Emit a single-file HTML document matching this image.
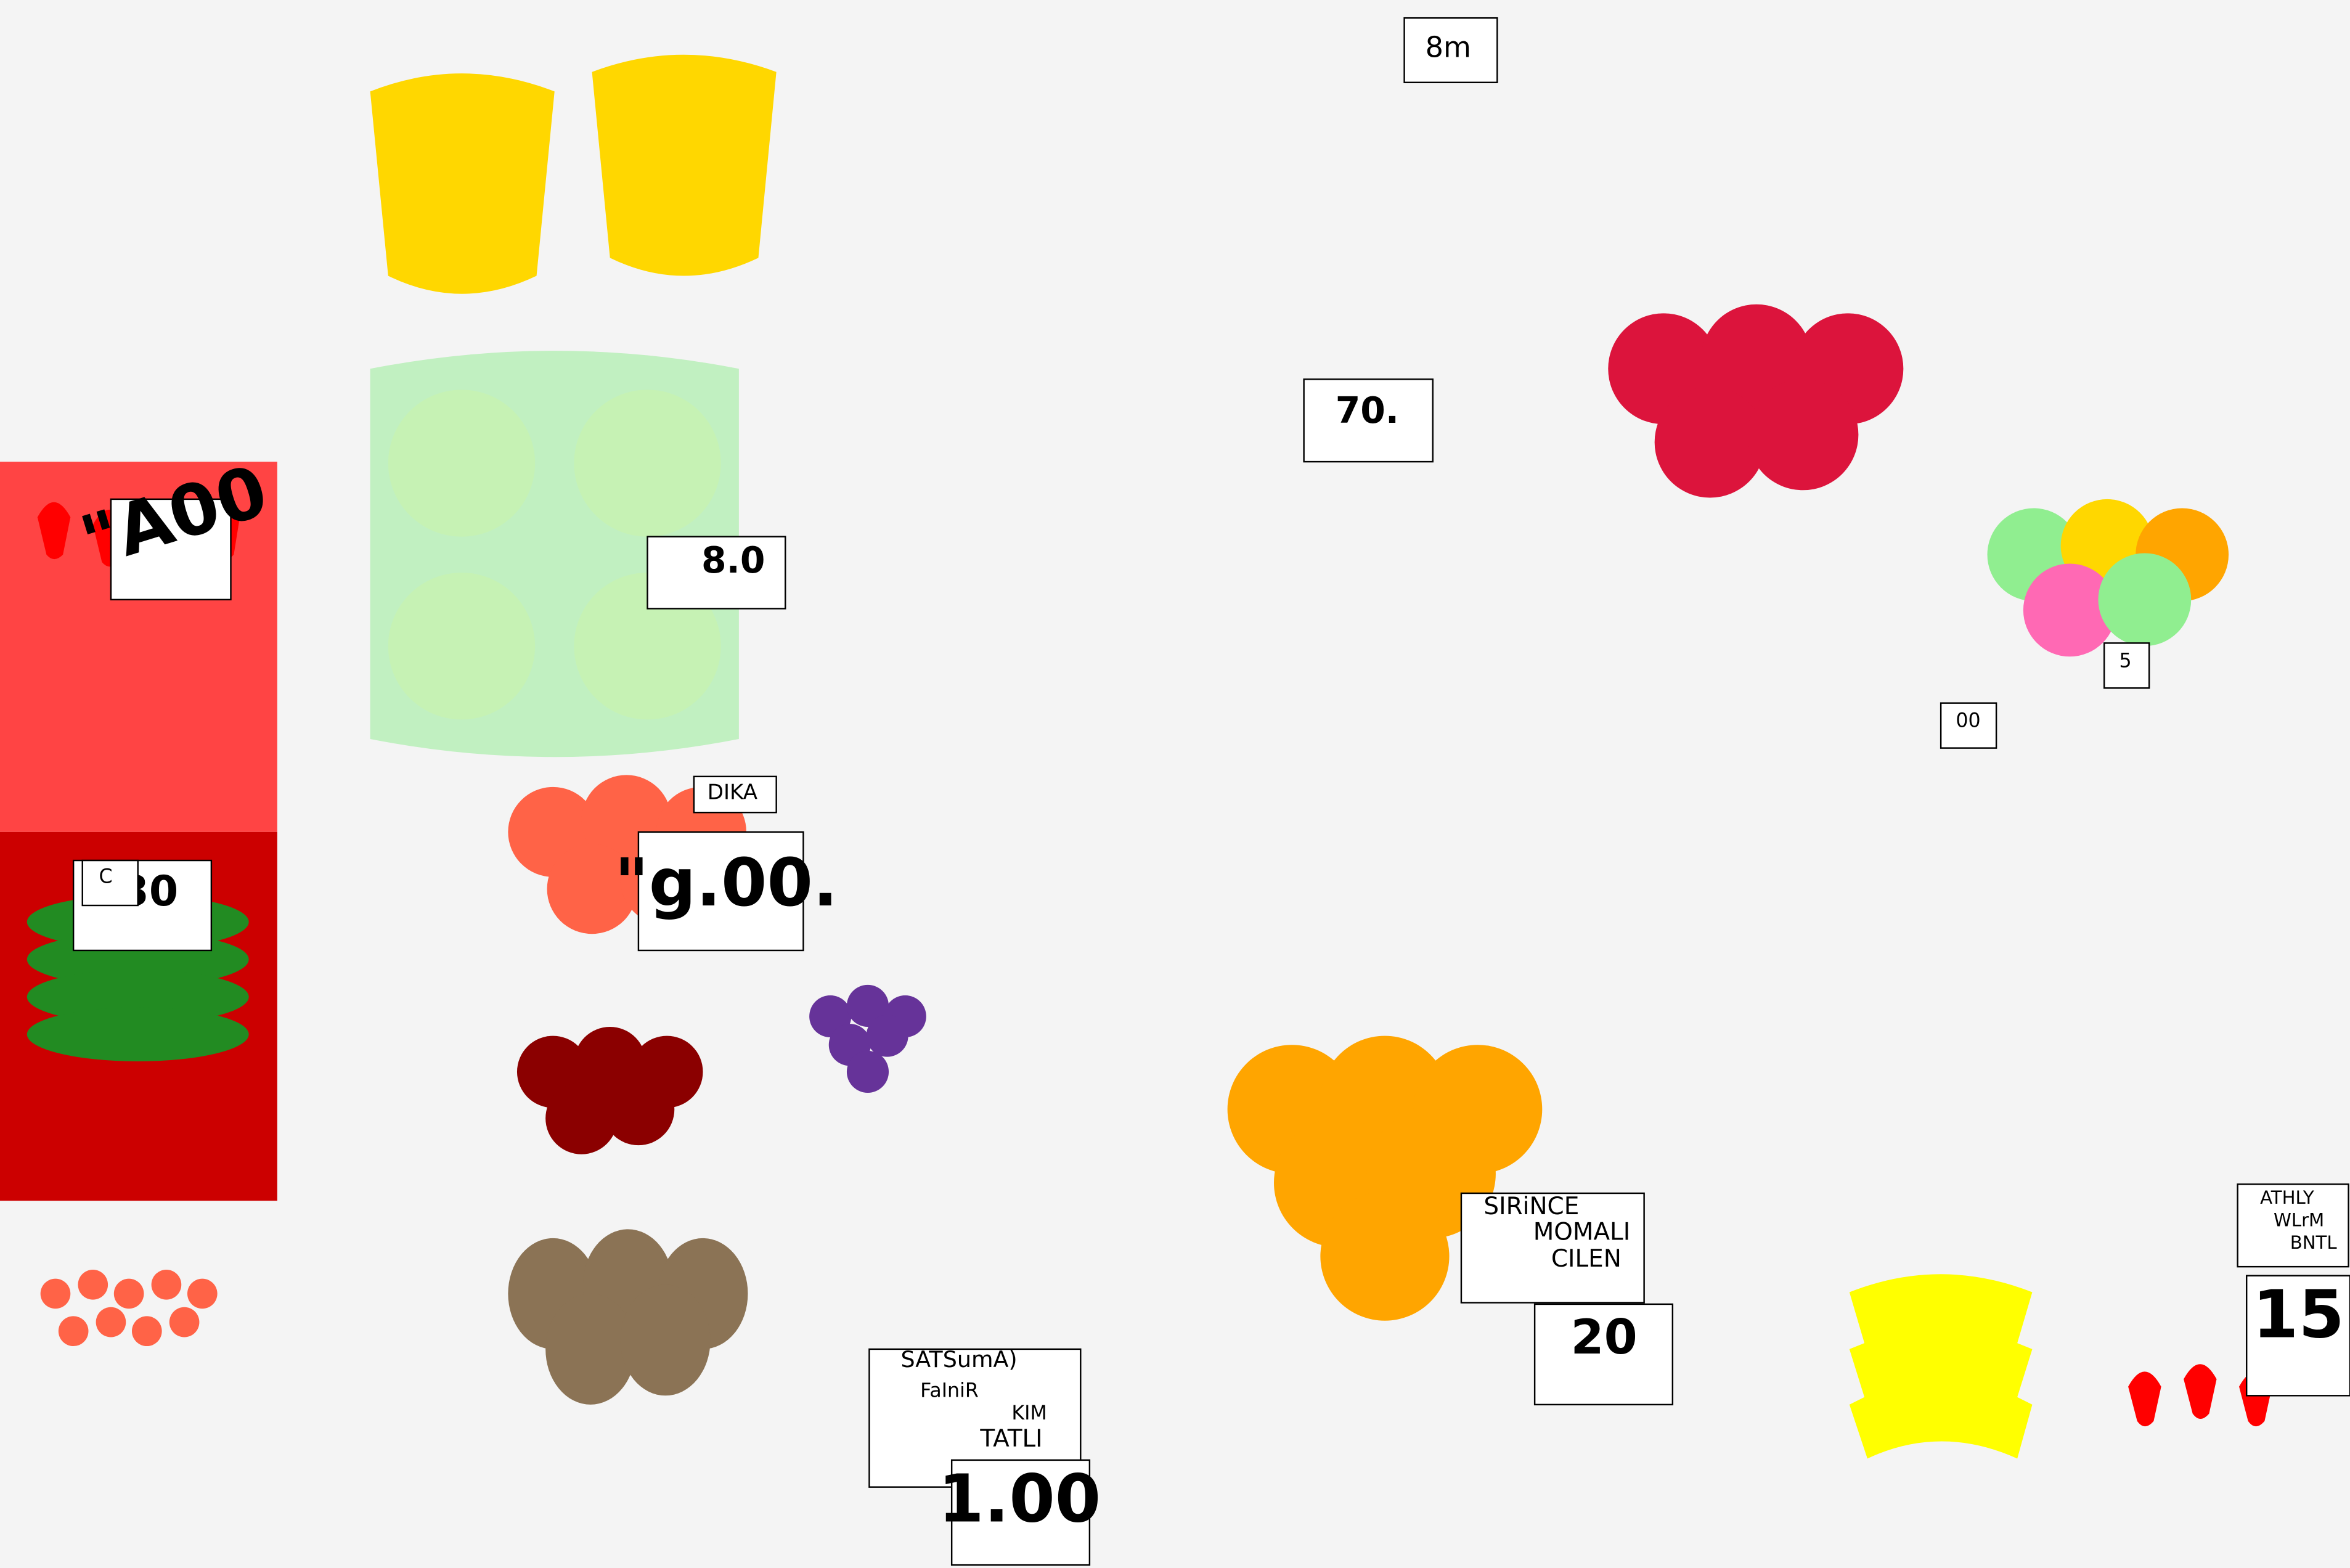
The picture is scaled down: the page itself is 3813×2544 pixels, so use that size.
<!DOCTYPE html>
<html><head><meta charset="utf-8"><style>
html,body{margin:0;padding:0;background:#f4f4f4;}
svg{display:block;}
text{font-family:"DejaVu Sans","Liberation Sans",sans-serif;}
</style></head><body>
<svg width="3813" height="2544" viewBox="0 0 1568 1046" preserveAspectRatio="none" xmlns="http://www.w3.org/2000/svg">
<rect width="1568" height="1046" fill="#f4f4f4"/>
<path d="M247,61 Q308,37 370,61 L358,184 Q308,208 259,184 Z" fill="#FFD700"/>
<path d="M395,48 Q456,25 518,48 L506,172 Q456,196 407,172 Z" fill="#FFD700"/>
<path d="M247,246 Q370,222 493,246 L493,493 Q370,517 247,493 Z" fill="#c1f0c1"/>
<g fill="#c6f2b4"><circle cx="308" cy="309" r="49"/><circle cx="432" cy="309" r="49"/><circle cx="308" cy="431" r="49"/><circle cx="432" cy="431" r="49"/></g>
<rect x="0" y="308" width="185" height="247" fill="#ff4444"/>
<rect x="0" y="555" width="185" height="246" fill="#cc0000"/>
<g fill="#ff0000">
<path d="M25,345 Q36,325 47,345 L42,370 Q36,376 31,370 Z"/>
<path d="M62,350 Q73,330 84,350 L79,375 Q73,381 68,375 Z"/>
<path d="M140,345 Q151,325 160,345 L156,370 Q151,376 146,370 Z"/>
</g>
<rect x="74" y="333" width="80" height="67" fill="#fff" stroke="#000"/>
<text x="50" y="362" font-size="47" font-weight="bold" transform="rotate(-17 110 335)">"A00</text>
<g fill="#228b22"><ellipse cx="92" cy="615" rx="74" ry="18"/><ellipse cx="92" cy="640" rx="74" ry="18"/><ellipse cx="92" cy="665" rx="74" ry="18"/><ellipse cx="92" cy="690" rx="74" ry="18"/></g>
<rect x="49" y="574" width="92" height="60" fill="#fff" stroke="#000"/>
<text x="80" y="604" font-size="28" font-weight="bold">30</text>
<rect x="55" y="574" width="37" height="30" fill="#fff" stroke="#000"/>
<text x="66" y="589" font-size="13">C</text>
<g fill="#ff6347"><circle cx="369" cy="555" r="30"/><circle cx="418" cy="547" r="30"/><circle cx="468" cy="555" r="30"/><circle cx="395" cy="593" r="30"/><circle cx="444" cy="587" r="30"/></g>
<rect x="463" y="518" width="55" height="24" fill="#fff" stroke="#000"/>
<text x="472" y="533" font-size="14">DIKA</text>
<rect x="426" y="555" width="110" height="79" fill="#fff" stroke="#000"/>
<text x="410" y="604" font-size="44" font-weight="bold">"g.00.</text>
<rect x="432" y="358" width="92" height="48" fill="#fff" stroke="#000"/>
<text x="468" y="382" font-size="24" font-weight="bold">8.0</text>
<rect x="870" y="253" width="86" height="55" fill="#fff" stroke="#000"/>
<text x="891" y="282" font-size="24" font-weight="bold">70.</text>
<rect x="937" y="12" width="62" height="43" fill="#fff" stroke="#000"/>
<text x="951" y="38" font-size="19">8m</text>
<g fill="#dc143c"><circle cx="1110" cy="246" r="37"/><circle cx="1172" cy="240" r="37"/><circle cx="1233" cy="246" r="37"/><circle cx="1141" cy="295" r="37"/><circle cx="1203" cy="290" r="37"/></g>
<circle cx="1357" cy="370" r="31" fill="#90ee90"/><circle cx="1406" cy="364" r="31" fill="#FFD700"/><circle cx="1456" cy="370" r="31" fill="#ffa500"/><circle cx="1381" cy="407" r="31" fill="#ff69b4"/><circle cx="1431" cy="400" r="31" fill="#90ee90"/>
<rect x="1404" y="429" width="30" height="30" fill="#fff" stroke="#000"/>
<text x="1414" y="445" font-size="13">5</text>
<rect x="1295" y="469" width="37" height="30" fill="#fff" stroke="#000"/>
<text x="1305" y="485" font-size="13">00</text>
<g fill="#663399"><circle cx="554" cy="678" r="14"/><circle cx="579" cy="671" r="14"/><circle cx="604" cy="678" r="14"/><circle cx="567" cy="697" r="14"/><circle cx="592" cy="691" r="14"/><circle cx="579" cy="715" r="14"/></g>
<g fill="#8b0000"><circle cx="369" cy="715" r="24"/><circle cx="407" cy="709" r="24"/><circle cx="445" cy="715" r="24"/><circle cx="388" cy="746" r="24"/><circle cx="426" cy="740" r="24"/></g>
<g fill="#8b7355"><ellipse cx="369" cy="863" rx="30" ry="37"/><ellipse cx="419" cy="857" rx="30" ry="37"/><ellipse cx="469" cy="863" rx="30" ry="37"/><ellipse cx="394" cy="900" rx="30" ry="37"/><ellipse cx="444" cy="894" rx="30" ry="37"/></g>
<g fill="#ffa500"><circle cx="862" cy="740" r="43"/><circle cx="924" cy="734" r="43"/><circle cx="986" cy="740" r="43"/><circle cx="893" cy="789" r="43"/><circle cx="955" cy="783" r="43"/><circle cx="924" cy="838" r="43"/></g>
<rect x="975" y="796" width="122" height="73" fill="#fff" stroke="#000"/>
<text x="990" y="810" font-size="16">SIRiNCE</text>
<text x="1023" y="827" font-size="16">MOMALI</text>
<text x="1035" y="845" font-size="16">CILEN</text>
<rect x="1024" y="870" width="92" height="67" fill="#fff" stroke="#000"/>
<text x="1048" y="903" font-size="32" font-weight="bold">20</text>
<g fill="#ff6347"><circle cx="37" cy="863" r="10"/><circle cx="62" cy="857" r="10"/><circle cx="86" cy="863" r="10"/><circle cx="111" cy="857" r="10"/><circle cx="135" cy="863" r="10"/><circle cx="49" cy="888" r="10"/><circle cx="74" cy="882" r="10"/><circle cx="98" cy="888" r="10"/><circle cx="123" cy="882" r="10"/></g>
<rect x="580" y="900" width="141" height="92" fill="#fff" stroke="#000"/>
<text x="601" y="912" font-size="15">SATSumA)</text>
<text x="614" y="932" font-size="13">FaIniR</text>
<text x="675" y="947" font-size="13">KIM</text>
<text x="654" y="965" font-size="16">TATLI</text>
<rect x="635" y="974" width="92" height="70" fill="#fff" stroke="#000"/>
<text x="626" y="1015" font-size="44" font-weight="bold">1.00</text>
<path fill="#ffff00" d="M1234,862 Q1295,838 1356,862 L1346,896 L1356,900 L1346,932 L1356,937 L1346,973 Q1295,950 1246,973 L1234,937 L1244,932 L1234,900 L1244,896 Z"/>
<g fill="#ff0000">
<path d="M1420,925 Q1431,905 1442,925 L1437,948 Q1431,955 1426,948 Z"/>
<path d="M1457,920 Q1468,900 1479,920 L1474,943 Q1468,950 1463,943 Z"/>
<path d="M1494,925 Q1505,905 1516,925 L1511,948 Q1505,955 1500,948 Z"/>
</g>
<rect x="1493" y="790" width="74" height="55" fill="#fff" stroke="#000"/>
<text x="1508" y="803" font-size="12">ATHLY</text>
<text x="1517" y="818" font-size="12">WLrM</text>
<text x="1528" y="833" font-size="12">BNTL</text>
<rect x="1499" y="851" width="69" height="80" fill="#fff" stroke="#000"/>
<text x="1503" y="892" font-size="44" font-weight="bold">15</text>
</svg>
</body></html>
